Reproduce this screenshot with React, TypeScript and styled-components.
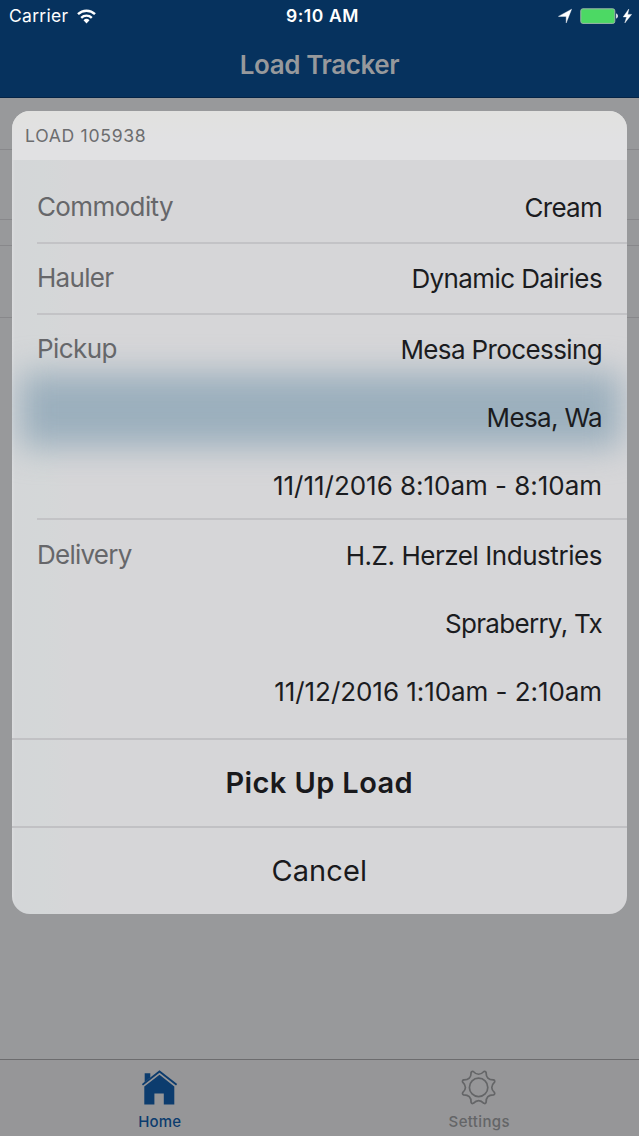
import React from 'react';
import styled, { createGlobalStyle } from 'styled-components';

const GlobalStyle = createGlobalStyle`
  * { box-sizing: border-box; }
  body {
    margin: 0;
    background: #98999b;
    font-family: Inter, 'Liberation Sans', sans-serif;
    font-kerning: normal;
  }
`;

const Screen = styled.div`
  position: relative;
  display: flex;
  flex-direction: column;
  width: 639px;
  height: 1136px;
  overflow: hidden;
  background: #98999b;
`;

const Header = styled.header`
  display: flex;
  flex-direction: column;
  height: 98px;
  background: #06325e;
  border-bottom: 1px solid #052446;
`;

const StatusBar = styled.div`
  display: grid;
  grid-template-columns: 1fr auto 1fr;
  align-items: center;
  height: 32px;
  padding: 0 7px 0 9px;
  color: #fff;
`;

const StatusGroup = styled.div<{ $end?: boolean }>`
  display: flex;
  align-items: center;
  justify-content: ${(p) => (p.$end ? 'flex-end' : 'flex-start')};
`;

const StatusText = styled.span<{ $bold?: boolean }>`
  font-size: 17.5px;
  line-height: 32px;
  font-weight: ${(p) => (p.$bold ? 600 : 400)};
  letter-spacing: ${(p) => (p.$bold ? '0.6px' : '0.3px')};
  margin-right: ${(p) => (p.$bold ? '-4px' : '9px')};
`;

const NavTitle = styled.h1`
  margin: 0;
  text-align: center;
  font-size: 26px;
  line-height: 66px;
  font-weight: 600;
  letter-spacing: -0.4px;
  color: #97999c;
`;

const List = styled.main`
  flex: 1;
  display: flex;
  flex-direction: column;
`;

const ListRow = styled.div<{ $height: number }>`
  height: ${(p) => p.$height}px;
  border-bottom: 1.5px solid #88888b;
`;

const TabBar = styled.nav`
  display: flex;
  height: 77px;
  border-top: 1px solid #6c6c6e;
  background: #969698;
`;

const Tab = styled.div<{ $active?: boolean }>`
  flex: 1;
  display: flex;
  flex-direction: column;
  align-items: center;
  padding-top: 10px;
  color: ${(p) => (p.$active ? '#0c3c6e' : '#646567')};
`;

const TabLabel = styled.span<{ $spacing: number }>`
  margin-top: 6px;
  font-size: 15px;
  line-height: 20px;
  font-weight: 450;
  letter-spacing: ${(p) => p.$spacing}px;
`;

const Overlay = styled.div`
  position: absolute;
  inset: 0;
  padding: 111px 12.5px 0 12px;
`;

const Sheet = styled.section`
  position: relative;
  height: 802.5px;
  display: flex;
  flex-direction: column;
  overflow: hidden;
  border-radius: 18px;
  background: linear-gradient(90deg, #dcdddf 0, #d4d6d8 3px, #d4d7d8 30px, #d6d6d8 60px, #d6d6d8 100%);
`;

const Glow = styled.div`
  position: absolute;
  left: 8px;
  right: 6px;
  top: 262px;
  height: 74px;
  background: #9bafbd;
  filter: blur(16px);
`;

const SheetHeader = styled.div`
  position: relative;
  height: 49px;
  padding: 0 13px;
  margin-bottom: 13px;
  font-size: 17.6px;
  line-height: 49px;
  letter-spacing: 0.7px;
  color: #6c6d6f;
  background: linear-gradient(#e1e1df, #e1e1e3 60%);
`;

const Row = styled.div<{ $height: number }>`
  position: relative;
  display: flex;
  justify-content: space-between;
  height: ${(p) => p.$height}px;
  margin-left: 25px;
  padding-right: 24.5px;
  box-shadow: inset 0 -2px 0 #c3c3c6;
`;

const LastRow = styled(Row)`
  padding-top: 1px;
  box-shadow: none;
`;

const Label = styled.div<{ $spacing: number }>`
  font-size: 26px;
  line-height: 68px;
  letter-spacing: ${(p) => p.$spacing}px;
  color: #66676a;
`;

const Values = styled.div`
  display: flex;
  flex-direction: column;
  align-items: flex-end;
  padding-top: 1px;
`;

const Value = styled.div<{ $spacing: number }>`
  font-size: 26px;
  line-height: 68px;
  letter-spacing: ${(p) => p.$spacing}px;
  white-space: nowrap;
  color: #1b1c1f;
`;

const Action = styled.button<{ $primary?: boolean }>`
  position: relative;
  height: 88px;
  padding: 0;
  border: 0;
  border-top: 2px solid #c1c1c4;
  background: transparent;
  font-family: inherit;
  font-size: 29px;
  line-height: 86px;
  font-weight: ${(p) => (p.$primary ? 570 : 400)};
  letter-spacing: ${(p) => (p.$primary ? '0.4px' : '0.1px')};
  color: #19191c;
`;

function WifiIcon() {
  return (
    <svg width="19" height="15" viewBox="0 0 19 15" fill="none" stroke="#fff" strokeWidth="2.4">
      <path d="M1 5.2a12.2 12.2 0 0 1 17 0" />
      <path d="M4.2 8.8a7.6 7.6 0 0 1 10.6 0" />
      <path d="M9.5 14.4 6.5 11.3a4.3 4.3 0 0 1 6 0z" fill="#fff" stroke="none" />
    </svg>
  );
}

function PowerIcons() {
  return (
    <svg width="74" height="16" viewBox="0 0 74 16">
      <path d="M13.6 1.2 8.2 15V8.4H0.4z" fill="#fff" stroke="#fff" strokeWidth="0.4" />
      <rect x="22.8" y="0.8" width="34" height="14.6" rx="2" fill="#4cd964" stroke="#9bb8a8" strokeWidth="1" />
      <path d="M58.2 5.5c2.2.6 2.2 4.4 0 5z" fill="#fff" />
      <path d="M70.8 1 65.2 8.9h3.4L66.8 15l6.8-8.6h-3.9z" fill="#fff" stroke="#fff" strokeWidth="0.4" />
    </svg>
  );
}

function HomeIcon() {
  return (
    <svg width="36" height="36" viewBox="0 0 36 36">
      <path d="M2.7 3.2h5.6v4.4L2.7 12.2z" fill="currentColor" />
      <path d="M.4 14.8 17.5 1.4 34.6 14.8" fill="none" stroke="currentColor" strokeWidth="1.9" />
      <path d="M17.5 4.7 32.3 16.4v18.2h-10.5V23.6h-9.4v11H2.3V16.4z" fill="currentColor" />
    </svg>
  );
}

function gearPath(cx: number, cy: number) {
  const point = (r: number, deg: number) => {
    const a = (deg * Math.PI) / 180;
    return `${(cx + r * Math.cos(a)).toFixed(2)} ${(cy + r * Math.sin(a)).toFixed(2)}`;
  };
  let d = `M${point(16.8, 18.5)}`;
  for (let i = 0; i < 8; i += 1) {
    const tip = 22.5 + i * 45;
    d += `Q${point(17.9, tip)} ${point(16.8, tip + 4)}`;
    d += `Q${point(10.4, tip + 22.5)} ${point(16.8, tip + 41)}`;
  }
  return `${d}z`;
}

function GearIcon() {
  return (
    <svg width="36" height="36" viewBox="0 0 36 36" fill="none" stroke="currentColor" strokeWidth="1.7" strokeLinejoin="round">
      <path d={gearPath(17.6, 17.4)} />
      <circle cx="17.6" cy="17.4" r="9.2" />
    </svg>
  );
}

type Text = [text: string, spacing: number];

interface Detail {
  label: Text;
  values: Text[];
  height: number;
}

const details: Detail[] = [
  { label: ['Commodity', -0.62], values: [['Cream', -0.75]], height: 71 },
  { label: ['Hauler', -0.7], values: [['Dynamic Dairies', -0.6]], height: 71 },
  {
    label: ['Pickup', -0.6],
    values: [['Mesa Processing', -0.62], ['Mesa, Wa', -0.66], ['11/11/2016 8:10am - 8:10am', -0.03]],
    height: 205,
  },
  {
    label: ['Delivery', -0.76],
    values: [['H.Z. Herzel Industries', -0.45], ['Spraberry, Tx', -0.7], ['11/12/2016 1:10am - 2:10am', -0.06]],
    height: 218,
  },
];

export default function App() {
  return (
    <Screen>
      <GlobalStyle />
      <Header>
        <StatusBar>
          <StatusGroup>
            <StatusText>Carrier</StatusText>
            <WifiIcon />
          </StatusGroup>
          <StatusText $bold>9:10 AM</StatusText>
          <StatusGroup $end>
            <PowerIcons />
          </StatusGroup>
        </StatusBar>
        <NavTitle>Load Tracker</NavTitle>
      </Header>
      <List>
        <ListRow $height={52} />
        <ListRow $height={70} />
        <ListRow $height={26} />
        <ListRow $height={72} />
      </List>
      <TabBar>
        <Tab $active>
          <HomeIcon />
          <TabLabel $spacing={0.15}>Home</TabLabel>
        </Tab>
        <Tab>
          <GearIcon />
          <TabLabel $spacing={0.35}>Settings</TabLabel>
        </Tab>
      </TabBar>
      <Overlay>
        <Sheet>
          <Glow />
          <SheetHeader>LOAD 105938</SheetHeader>
          {details.map(({ label, values, height }, i) => {
            const Wrapper = i === details.length - 1 ? LastRow : Row;
            return (
              <Wrapper key={label[0]} $height={height}>
                <Label $spacing={label[1]}>{label[0]}</Label>
                <Values>
                  {values.map(([text, spacing]) => (
                    <Value key={text} $spacing={spacing}>{text}</Value>
                  ))}
                </Values>
              </Wrapper>
            );
          })}
          <Action $primary>Pick Up Load</Action>
          <Action>Cancel</Action>
        </Sheet>
      </Overlay>
    </Screen>
  );
}
